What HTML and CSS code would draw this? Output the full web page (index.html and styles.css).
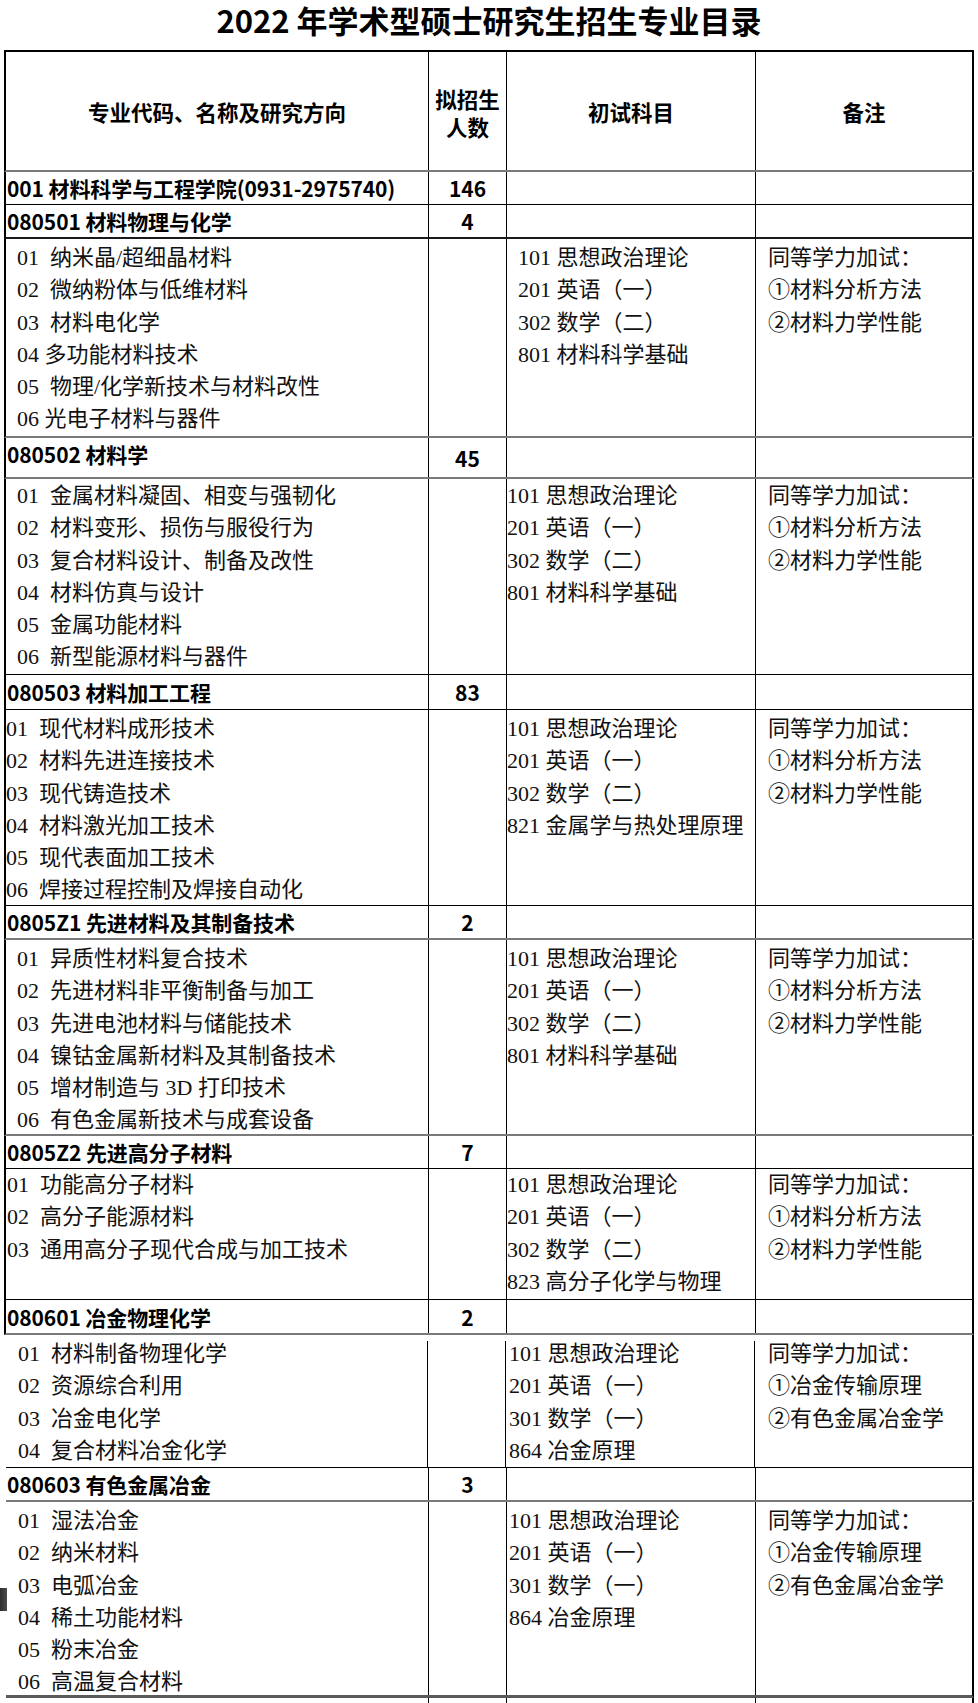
FILE: index.html
```html
<!DOCTYPE html>
<html lang="zh-CN">
<head>
<meta charset="utf-8">
<title>2022 年学术型硕士研究生招生专业目录</title>
<link rel="stylesheet" href="styles.css">
</head>
<body>
<h1 class="title">2022 年学术型硕士研究生招生专业目录</h1>
<div class="sheet">
  <div class="row hdr bg">
    <div class="c th">专业代码、名称及研究方向</div>
    <div class="c th two">拟招生<br>人数</div>
    <div class="c th">初试科目</div>
    <div class="c th">备注</div>
  </div>

  <div class="row h33 bk">
    <div class="c name">001 材料科学与工程学院(0931-2975740)</div>
    <div class="c num">146</div>
    <div class="c"></div>
    <div class="c"></div>
  </div>

  <div class="row h34 bk2">
    <div class="c name">080501 材料物理与化学</div>
    <div class="c num">4</div>
    <div class="c"></div>
    <div class="c"></div>
  </div>
  <div class="row h199 bg">
    <div class="c list ind11">
      <p>01  纳米晶/超细晶材料</p>
      <p>02  微纳粉体与低维材料</p>
      <p>03  材料电化学</p>
      <p>04 多功能材料技术</p>
      <p>05  物理/化学新技术与材料改性</p>
      <p>06 光电子材料与器件</p>
    </div>
    <div class="c"></div>
    <div class="c list ind11">
      <p>101 思想政治理论</p>
      <p>201 英语（一）</p>
      <p>302 数学（二）</p>
      <p>801 材料科学基础</p>
    </div>
    <div class="c list ind12">
      <p>同等学力加试：</p>
      <p>①材料分析方法</p>
      <p>②材料力学性能</p>
    </div>
  </div>

  <div class="row h41 bg">
    <div class="c name top">080502 材料学</div>
    <div class="c num">45</div>
    <div class="c"></div>
    <div class="c"></div>
  </div>
  <div class="row h196 bk">
    <div class="c list ind11 tight">
      <p>01  金属材料凝固、相变与强韧化</p>
      <p>02  材料变形、损伤与服役行为</p>
      <p>03  复合材料设计、制备及改性</p>
      <p>04  材料仿真与设计</p>
      <p>05  金属功能材料</p>
      <p>06  新型能源材料与器件</p>
    </div>
    <div class="c"></div>
    <div class="c list ind0 tight">
      <p>101 思想政治理论</p>
      <p>201 英语（一）</p>
      <p>302 数学（二）</p>
      <p>801 材料科学基础</p>
    </div>
    <div class="c list ind12 tight">
      <p>同等学力加试：</p>
      <p>①材料分析方法</p>
      <p>②材料力学性能</p>
    </div>
  </div>

  <div class="row h35 bk">
    <div class="c name">080503 材料加工工程</div>
    <div class="c num">83</div>
    <div class="c"></div>
    <div class="c"></div>
  </div>
  <div class="row h196 bk">
    <div class="c list ind0">
      <p>01  现代材料成形技术</p>
      <p>02  材料先进连接技术</p>
      <p>03  现代铸造技术</p>
      <p>04  材料激光加工技术</p>
      <p>05  现代表面加工技术</p>
      <p>06  焊接过程控制及焊接自动化</p>
    </div>
    <div class="c"></div>
    <div class="c list ind0">
      <p>101 思想政治理论</p>
      <p>201 英语（一）</p>
      <p>302 数学（二）</p>
      <p>821 金属学与热处理原理</p>
    </div>
    <div class="c list ind12">
      <p>同等学力加试：</p>
      <p>①材料分析方法</p>
      <p>②材料力学性能</p>
    </div>
  </div>

  <div class="row h34 bg">
    <div class="c name">0805Z1 先进材料及其制备技术</div>
    <div class="c num">2</div>
    <div class="c"></div>
    <div class="c"></div>
  </div>
  <div class="row h196 bg">
    <div class="c list ind11">
      <p>01  异质性材料复合技术</p>
      <p>02  先进材料非平衡制备与加工</p>
      <p>03  先进电池材料与储能技术</p>
      <p>04  镍钴金属新材料及其制备技术</p>
      <p>05  增材制造与 3D 打印技术</p>
      <p>06  有色金属新技术与成套设备</p>
    </div>
    <div class="c"></div>
    <div class="c list ind0">
      <p>101 思想政治理论</p>
      <p>201 英语（一）</p>
      <p>302 数学（二）</p>
      <p>801 材料科学基础</p>
    </div>
    <div class="c list ind12">
      <p>同等学力加试：</p>
      <p>①材料分析方法</p>
      <p>②材料力学性能</p>
    </div>
  </div>

  <div class="row h33 bk">
    <div class="c name">0805Z2 先进高分子材料</div>
    <div class="c num">7</div>
    <div class="c"></div>
    <div class="c"></div>
  </div>
  <div class="row h131 bk">
    <div class="c list ind1 flush">
      <p>01  功能高分子材料</p>
      <p>02  高分子能源材料</p>
      <p>03  通用高分子现代合成与加工技术</p>
    </div>
    <div class="c"></div>
    <div class="c list ind0 flush">
      <p>101 思想政治理论</p>
      <p>201 英语（一）</p>
      <p>302 数学（二）</p>
      <p>823 高分子化学与物理</p>
    </div>
    <div class="c list ind12 flush">
      <p>同等学力加试：</p>
      <p>①材料分析方法</p>
      <p>②材料力学性能</p>
    </div>
  </div>

  <div class="row h35 bg">
    <div class="c name">080601 冶金物理化学</div>
    <div class="c num">2</div>
    <div class="c"></div>
    <div class="c"></div>
  </div>
  <div class="row h133 bk noleft gap">
    <div class="c list ind12">
      <p>01  材料制备物理化学</p>
      <p>02  资源综合利用</p>
      <p>03  冶金电化学</p>
      <p>04  复合材料冶金化学</p>
    </div>
    <div class="c"></div>
    <div class="c list ind2">
      <p>101 思想政治理论</p>
      <p>201 英语（一）</p>
      <p>301 数学（一）</p>
      <p>864 冶金原理</p>
    </div>
    <div class="c list ind12">
      <p>同等学力加试：</p>
      <p>①冶金传输原理</p>
      <p>②有色金属冶金学</p>
    </div>
  </div>

  <div class="row h34 bg noleft">
    <div class="c name">080603 有色金属冶金</div>
    <div class="c num">3</div>
    <div class="c"></div>
    <div class="c"></div>
  </div>
  <div class="row h196 bg3 noleft mark">
    <div class="c list ind12">
      <p>01  湿法冶金</p>
      <p>02  纳米材料</p>
      <p>03  电弧冶金</p>
      <p>04  稀土功能材料</p>
      <p>05  粉末冶金</p>
      <p>06  高温复合材料</p>
    </div>
    <div class="c"></div>
    <div class="c list ind2">
      <p>101 思想政治理论</p>
      <p>201 英语（一）</p>
      <p>301 数学（一）</p>
      <p>864 冶金原理</p>
    </div>
    <div class="c list ind12">
      <p>同等学力加试：</p>
      <p>①冶金传输原理</p>
      <p>②有色金属冶金学</p>
    </div>
  </div>

  <div class="row h5 noleft">
    <div class="c"></div>
    <div class="c"></div>
    <div class="c"></div>
    <div class="c"></div>
  </div>
</div>
</body>
</html>
```

FILE: styles.css
```css
* { box-sizing: border-box; }

html, body {
  margin: 0;
  padding: 0;
  background: #fff;
  overflow: hidden;
}

body {
  width: 978px;
  height: 1703px;
  font-family: "Liberation Serif", "Noto Sans CJK SC", serif;
  font-size: 21px;
  color: #111;
}

.title {
  margin: 0;
  height: 50px;
  padding-top: 1px;
  text-align: center;
  font: 700 31px/38px "Noto Sans CJK SC", sans-serif;
  color: #000;
}

.sheet {
  margin-left: 4px;
  width: 970px;
  border-top: 2px solid #000;
}

.row {
  display: grid;
  grid-template-columns: 423px 78px 249px 216px;
  width: 970px;
  border-left: 2px solid #000;
  border-right: 2px solid #000;
  position: relative;
}

.row.noleft {
  border-left: 0;
  margin-left: 2px;
  width: 968px;
}

/* row heights (including the bottom rule) */
.hdr  { height: 120px; }
.h5   { height: 5px; }
.h33  { height: 33px; }
.h34  { height: 34px; }
.h35  { height: 35px; }
.h41  { height: 41px; }
.h131 { height: 131px; }
.h133 { height: 133px; }
.h196 { height: 196px; }
.h199 { height: 199px; }

/* bottom rules */
.bg  { border-bottom: 2px solid #7a7a7a; }
.bk  { border-bottom: 1px solid #000; }
.bk2 { border-bottom: 2px solid #1a1a1a; }
.bg3 { border-bottom: 3px solid #5a5a5a; }

.c {
  border-right: 1px solid #000;
  min-width: 0;
  overflow: hidden;
}
.c:last-child { border-right: 0; }

.gap .c {
  border-right-color: transparent;
  background-image: linear-gradient(#000, #000);
  background-repeat: no-repeat;
  background-size: 1px calc(100% - 6px);
  background-position: right bottom;
}
.gap .c:last-child { background-image: none; }

.th {
  display: flex;
  align-items: center;
  justify-content: center;
  text-align: center;
  font-family: "Noto Sans CJK SC", sans-serif;
  font-weight: 700;
  font-size: 21.5px;
  color: #000;
}
.th.two { line-height: 28px; padding-top: 4px; }

.name {
  display: flex;
  align-items: center;
  padding-left: 1px;
  white-space: nowrap;
  font-family: "Noto Sans CJK SC", sans-serif;
  font-weight: 700;
  color: #000;
  letter-spacing: -0.1px;
}
.name.top { align-items: flex-start; padding-top: 1px; }

.num {
  display: flex;
  align-items: center;
  justify-content: center;
  font-family: "Noto Sans CJK SC", sans-serif;
  font-weight: 700;
  color: #000;
}

.list {
  padding-top: 3px;
  font-size: 22px;
  line-height: 32.3px;
}
.list.tight { padding-top: 1px; }
.list.flush { padding-top: 0; }
.list p {
  margin: 0;
  white-space: pre;
}

.ind0  { padding-left: 0; }
.ind1  { padding-left: 1px; }
.ind2  { padding-left: 2px; }
.ind11 { padding-left: 11px; }
.ind12 { padding-left: 12px; }

.mark::before {
  content: "";
  position: absolute;
  left: -6px;
  top: 86px;
  width: 7px;
  height: 23px;
  background: linear-gradient(90deg, #2e2e2e, #4a4a4a);
}
```
